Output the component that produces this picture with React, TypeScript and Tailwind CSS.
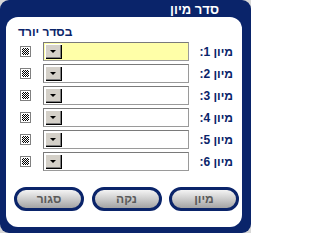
import React from "react";

const NAVY = "#0a246a";

function Checkbox() {
  return (
    <div className="w-[11px] h-[11px] border border-[#808080] bg-white p-[1px] shrink-0">
      <div className="w-full h-full bg-[repeating-conic-gradient(#000_0_25%,#fff_0_50%)] bg-[length:2px_2px]" />
    </div>
  );
}

function Select({ yellow }: { yellow?: boolean }) {
  return (
    <div
      className={`w-[146px] h-[19px] border border-[#9a9a9a] border-l-[#7a7a7a] border-t-[#7a7a7a] p-[1px] flex ${
        yellow ? "bg-[#ffffa8]" : "bg-white"
      }`}
    >
      <div className="w-[17px] h-[15px] bg-[#d4d0c8] shadow-[inset_1px_1px_#ffffff,inset_-1px_-1px_#000000,inset_-2px_-2px_#808080] flex items-center justify-center">
        <div className="w-0 h-0 border-l-[3px] border-r-[3px] border-t-[3px] border-l-transparent border-r-transparent border-t-black -mt-[1px] -ml-[1px]" />
      </div>
    </div>
  );
}

function Row({ n, yellow }: { n: number; yellow?: boolean }) {
  return (
    <div className="h-[19px] flex items-center">
      <div className="ml-[14px] mr-[12px] flex items-center">
        <Checkbox />
      </div>
      <Select yellow={yellow} />
      <div className="flex-1 flex justify-end pr-[9px]">
        <span dir="rtl" className="text-[12px] leading-[14px] font-bold text-[#0a246a]">
          מיון {n}:
        </span>
      </div>
    </div>
  );
}

function PillButton({ label }: { label: string }) {
  return (
    <div className="w-[70px] h-[24px] rounded-full border-[3px] border-[#0a246a] bg-[linear-gradient(#f4f4f4,#c8c8c8_55%,#a4a4a4)] flex items-center justify-center">
      <span dir="rtl" className="text-[12px] leading-[14px] font-bold text-[#5a5a5a]">
        {label}
      </span>
    </div>
  );
}

export default function App() {
  return (
    <div
      className="w-[251px] h-[233px] bg-[#d8d8d8]"
      style={{ fontFamily: '"Liberation Sans", Arial, "DejaVu Sans", sans-serif' }}
    >
      <div className="w-full h-full rounded-[9px] flex flex-col pl-[6px] pr-[9px] pb-[6px]" style={{ backgroundColor: NAVY }}>
        <div className="h-[17px] flex justify-end items-center pr-[23px]">
          <span dir="rtl" className="text-white font-bold text-[13px] leading-[15px] mt-[1px]">
            סדר מיון
          </span>
        </div>
        <div className="flex-1 bg-white rounded-[12px] flex flex-col">
          <div className="h-[25px] pt-[8px] pl-[12px]">
            <div dir="rtl" className="w-fit text-[12px] leading-[14px] font-bold text-[#0a246a]">
              בסדר יורד
            </div>
          </div>
          <div className="flex flex-col gap-[3px]">
            <Row n={1} yellow />
            <Row n={2} />
            <Row n={3} />
            <Row n={4} />
            <Row n={5} />
            <Row n={6} />
          </div>
          <div className="flex justify-between pl-[8px] pr-[3px] mt-[16px]">
            <PillButton label="סגור" />
            <PillButton label="נקה" />
            <PillButton label="מיון" />
          </div>
        </div>
      </div>
    </div>
  );
}
